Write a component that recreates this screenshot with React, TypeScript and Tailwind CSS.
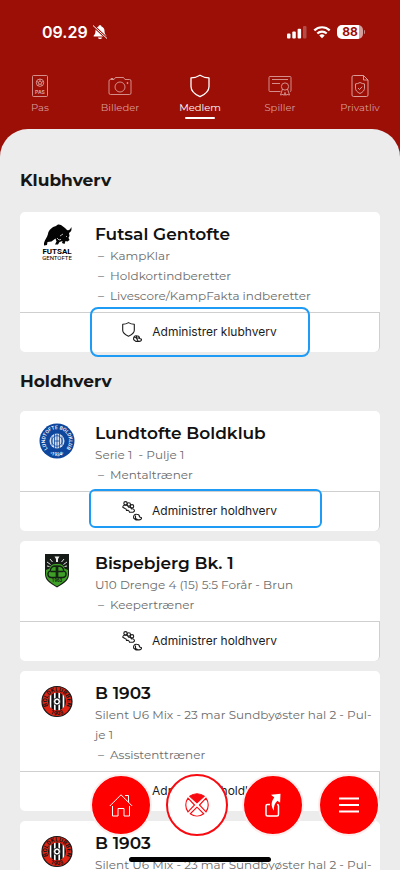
import React from "react";
import type { ReactNode } from "react";

const heading = "font-[Montserrat,Inter,'Noto_Sans',sans-serif]";

function PassIcon() {
  return (
    <svg viewBox="0 0 24 24" className="size-6" fill="none" stroke="currentColor" strokeWidth="0.9" aria-hidden="true">
      <rect x="4.500" y="1.500" width="15" height="21" rx="1" />
      <circle cx="12" cy="8.700" r="3.700" />
      <path d="M12 7l1.700 1.200-.7 2h-2l-.7-2zM12 7V5M13.700 8.200l2-.8M13 10.200l1.200 1.600M11 10.200l-1.200 1.600M10.300 8.200l-2-.8" />
      <text x="12" y="20" textAnchor="middle" fontSize="5" fontWeight="700" fill="currentColor" stroke="none" fontFamily="Inter, sans-serif">PAS</text>
    </svg>
  );
}

function CameraIcon() {
  return (
    <svg viewBox="0 0 24 24" className="size-6" fill="none" stroke="currentColor" strokeWidth="0.9" aria-hidden="true">
      <path d="M2.500 5.500H6l1.500-2h8l1.500 2h4.500a1.500 1.500 0 0 1 1.500 1.500v12a1.500 1.500 0 0 1-1.500 1.500h-19A1.500 1.500 0 0 1 1 19V7a1.500 1.500 0 0 1 1.500-1.500zM3 5.500v-1h2v1" />
      <circle cx="12" cy="13" r="5" />
      <circle cx="19.500" cy="9" r=".6" fill="currentColor" />
    </svg>
  );
}

function ShieldIcon() {
  return (
    <svg viewBox="0 0 24 24" className="size-6" fill="none" stroke="currentColor" strokeWidth="1.300" strokeLinejoin="round" aria-hidden="true">
      <path d="M12 1.200C9 3 6 3.800 3 3.900v8.500c0 4.300 3.500 7.700 9 10.300 5.500-2.600 9-6 9-10.300V3.900c-3-.1-6-.9-9-2.700z" />
    </svg>
  );
}

function CertificateIcon() {
  return (
    <svg viewBox="0 0 24 24" className="size-6" fill="none" stroke="currentColor" strokeWidth="0.900" aria-hidden="true">
      <path d="M12.500 17.500H2a1 1 0 0 1-1-1v-13a1 1 0 0 1 1-1h20a1 1 0 0 1 1 1v13a1 1 0 0 1-1 1M4 5.500h16M4 9.500h8" />
      <circle cx="17" cy="12.500" r="3.600" />
      <path d="M14.500 15l-2 6 2.500-.6 1.200 1 .8-3 .8 3 1.200-1 2.500.6-2-6" />
    </svg>
  );
}

function PrivacyIcon() {
  return (
    <svg viewBox="0 0 24 24" className="size-6" fill="none" stroke="currentColor" strokeWidth="1" strokeLinejoin="round" aria-hidden="true">
      <path d="M15.500 1.500h-10a1.500 1.500 0 0 0-1.500 1.500v18a1.500 1.500 0 0 0 1.500 1.500h13a1.500 1.500 0 0 0 1.500-1.500V6zM15.500 1.500V6H20" />
      <path d="M12 8.500c-1.500.9-3 1.300-4.500 1.400v4.300c0 2.200 1.700 4 4.500 5.300 2.800-1.300 4.500-3.100 4.500-5.300V9.900c-1.500-.1-3-.5-4.500-1.400zM10 14l1.500 1.500 2.700-2.800" />
    </svg>
  );
}

const tabs = [
  { label: "Pas", icon: <PassIcon /> },
  { label: "Billeder", icon: <CameraIcon /> },
  { label: "Medlem", icon: <ShieldIcon />, active: true },
  { label: "Spiller", icon: <CertificateIcon /> },
  { label: "Privatliv", icon: <PrivacyIcon /> },
];

function StatusBar() {
  return (
    <div className="flex items-center justify-between pt-5 pr-[35px] pl-[42px] font-[Inter,sans-serif]">
      <div className="flex items-center gap-1">
        <span className="text-base leading-6 font-semibold">09.29</span>
        <svg viewBox="0 0 16 16" className="size-4" aria-label="Lydløs">
          <path fill="currentColor" d="M8 1.200c.8 0 1.400.5 1.500 1.200 2 .7 3 2.300 3 4.400 0 2.700.8 3.700 1.700 4.600.5.500.2 1.200-.5 1.200H2.300c-.7 0-1-.7-.5-1.200.9-.9 1.700-1.900 1.700-4.600 0-2.100 1-3.700 3-4.400C6.600 1.700 7.200 1.200 8 1.200zM6 13.400h4c-.2 1.100-1 1.700-2 1.700s-1.800-.6-2-1.700z" />
          <path stroke="#9b0f07" strokeWidth="2.400" d="M1 1.500l14 13" />
          <path stroke="currentColor" strokeWidth="1" d="M1 1.500l14 13" />
        </svg>
      </div>
      <div className="flex items-center gap-1.5">
        <svg viewBox="0 0 20 14" className="h-3.5 w-5" fill="currentColor" aria-label="Mobilsignal">
          <rect x="0" y="8.500" width="3.500" height="5" rx="1" />
          <rect x="5.300" y="6.500" width="3.500" height="7" rx="1" />
          <rect x="10.600" y="3.700" width="3.500" height="9.800" rx="1" />
          <rect x="16" y="1" width="3.500" height="12.500" rx="1" opacity=".25" />
        </svg>
        <svg viewBox="0 0 18 14" className="h-3.5 w-[18px]" fill="none" stroke="currentColor" strokeWidth="2.200" aria-label="Wi-Fi">
          <path d="M1.300 5.400a11 11 0 0 1 15.400 0M4.300 8.500a6.700 6.700 0 0 1 9.400 0" />
          <path stroke="none" fill="currentColor" d="M9 13.300l-2.700-2.700a3.800 3.800 0 0 1 5.400 0z" />
        </svg>
        <div className="flex items-center gap-px">
          <span className="flex h-3.5 w-[26px] items-center justify-center rounded-[5px] bg-linear-to-r from-white from-85% to-[#d79f9b] to-85% text-xs leading-3 font-bold text-[#9b0f07]">88</span>
          <span className="h-1 w-px rounded-r bg-white/50" />
        </div>
      </div>
    </div>
  );
}

function FutsalLogo() {
  return (
    <svg viewBox="0 0 36 36" className="size-9" role="img" aria-label="Futsal Gentofte">
      <path d="M5 19c1-4 3-5 4-9 .5-4 4-7 8-8 1-1.500 3-2 5-1l4 3 2 2c2 .8 3.500-.5 4.300-3 .8 3-.3 5-2.300 6l.5 3-1 1.800 1 2.200-2 1.500-2-.5-1 3-2.500-1 .5-2-3 1-1.500 2.500H16l1.500-3-1-3-4 3-4 .5L8 21l-3 .5z" fill="#050505" />
      <path d="M18 14l2 2 2-.6M24 10l-3 2M27 12l1 1" stroke="#fff" strokeWidth=".7" fill="none" />
      <g fontFamily="'Liberation Sans Narrow', Roboto, sans-serif" textAnchor="middle">
        <text x="18" y="29.500" fontSize="8" fontWeight="700">FUTSAL</text>
        <text x="18" y="35.500" fontSize="6">GENTOFTE</text>
      </g>
    </svg>
  );
}

function LundtofteLogo() {
  return (
    <svg viewBox="0 0 36 36" className="size-9" role="img" aria-label="Lundtofte Boldklub">
      <defs>
        <path id="lundtofte-top" d="M9 26A12 12 0 1 1 27 26" />
        <path id="lundtofte-bottom" d="M7 28.500A15.500 15.500 0 0 0 29 28.500" />
      </defs>
      <circle cx="18" cy="18" r="17.500" fill="#0d469c" />
      <g fill="#fff" fontFamily="Roboto, sans-serif" fontWeight="500" fontSize="5">
        <text><textPath href="#lundtofte-top" startOffset="50%" textAnchor="middle">LUNDTOFTE BOLDKLUB</textPath></text>
        <text><textPath href="#lundtofte-bottom" startOffset="50%" textAnchor="middle">•1934•</textPath></text>
      </g>
      <circle cx="18" cy="18" r="7.500" fill="#d5deee" />
      <circle cx="18" cy="18" r="5.300" fill="none" stroke="#0d469c" strokeWidth=".8" />
      <path d="M15.500 11v14M20.500 11v14M13 13.500v9M23 13.500v9M18 10.500v15M15.500 18h5" stroke="#0d469c" strokeWidth=".8" />
    </svg>
  );
}

function BispebjergLogo() {
  return (
    <svg viewBox="0 0 36 36" className="size-9" role="img" aria-label="Bispebjerg Boldklub">
      <path d="M6 1h24v20c0 6-4 9-12 13.500C10 30 6 27 6 21z" fill="#171b17" />
      <path d="M7 17l3.500-1.500C11 12 14 10.500 18 11c4-.5 7 1 7.500 4.500L29 17v4c0 5-4 8-11 12.200C11 29 7 26 7 21z" fill="#3fa027" />
      <path d="M15.500 3.500h5L19 6v3h-2V6z" fill="#eee" />
      <path d="M8 9l3.500 2.500M11 6l2.500 3M28 9l-3.500 2.500M25 6l-2.500 3M8 13l2.500.5M28 13l-2.500.5" stroke="#ddd" strokeWidth="1" />
      <g fill="none" stroke="#132013" strokeWidth="1.300">
        <path d="M17.300 13v11.500h-5c-4 0-4.500-5.500-1-6.500 0-3 2-5 6-5zM11.500 18.500h5.800M18.700 13v11.500h5c4 0 4.500-5.500 1-6.500 0-3-2-5-6-5zM24.500 18.500h-5.800" />
      </g>
      <text x="18" y="29.300" textAnchor="middle" fontSize="4.500" fontWeight="700" fontFamily="Roboto, sans-serif" fill="#132013">1963</text>
    </svg>
  );
}

function B1903Logo({ id }: { id: string }) {
  return (
    <svg viewBox="0 0 36 36" className="size-9" role="img" aria-label="Boldklubben 1903">
      <defs>
        <path id={id + "-top"} d="M10 25A10.200 10.200 0 1 1 26 25" />
        <path id={id + "-bottom"} d="M8.500 28.500A14 14 0 0 0 27.500 28.500" />
        <clipPath id={id + "-clip"}><circle cx="18" cy="18.500" r="9" /></clipPath>
      </defs>
      <circle cx="18" cy="18.500" r="15" fill="#e12313" stroke="#161616" strokeWidth="1.200" />
      <circle cx="18" cy="18.500" r="9" fill="#111" />
      <g clipPath={`url(#${id}-clip)`}>
        <path d="M11.500 9v19M15.800 9v19M20.200 9v19M24.500 9v19" stroke="#fff" strokeWidth="1.700" />
      </g>
      <circle cx="18" cy="18.500" r="3.600" fill="#fff" stroke="#111" strokeWidth=".8" />
      <path d="M18 16.800l1.600 1.200-.6 1.900h-2l-.6-1.900z" fill="#111" />
      <g fill="#161616" fontFamily="Roboto, sans-serif" fontWeight="700" fontSize="6">
        <text><textPath href={`#${id}-top`} startOffset="50%" textAnchor="middle">BOLDKLUBBEN</textPath></text>
        <text><textPath href={`#${id}-bottom`} startOffset="50%" textAnchor="middle">1903</textPath></text>
      </g>
    </svg>
  );
}

function ClubAdminIcon() {
  return (
    <svg viewBox="0 0 20 20" className="size-5" fill="none" stroke="#1c1c1c" strokeWidth="1.100" strokeLinejoin="round" aria-hidden="true">
      <path d="M6.500.6C4.500 1.800 2.500 2.200.7 2.300v6c0 2.600 2.300 4.400 5.800 6 3.500-1.600 5.800-3.400 5.800-6v-6c-1.800-.1-3.800-.5-5.800-1.700z" />
      <path d="M11.800 17.800c-.8-2.500.7-4.300 2.900-4 1.900 0 2.800 1.200 2.900 2.700l2 .8c0 1.400-1 2.100-2.500 2.100h-3.300zM12.500 15.500l5 .8M14.500 14.200v2l1.500 2.600" />
    </svg>
  );
}

function TeamAdminIcon() {
  return (
    <svg viewBox="0 0 20 20" className="size-5" fill="none" stroke="#1c1c1c" strokeWidth="1.100" strokeLinejoin="round" aria-hidden="true">
      <circle cx="3.500" cy="2.300" r="1.700" />
      <circle cx="6.800" cy="3.500" r="1.700" />
      <circle cx="10" cy="5.300" r="1.700" />
      <path d="M.8 6.300c0-1.800 1.500-2.600 3-2 1.500-.2 2.500.7 2.700 1.900 1.600-.4 2.700.4 3 1.700 1.500-.5 3 .5 3 2.100L11 11.300H7.500c0-1-.4-1.600-1.200-1.900H4.500C4.500 8.300 4 7.600 3 7.500z" />
      <path d="M11.800 17.300c-.8-2.500.7-4.300 2.900-4 1.900 0 2.800 1.200 2.900 2.700l2 .8c0 1.400-1 2.100-2.500 2.100h-3.300zM13.500 14.500v3l2 1" />
    </svg>
  );
}

type CardProps = {
  logo: ReactNode;
  name: string;
  team?: string;
  roles: string[];
  action: string;
  icon: ReactNode;
  marker?: ReactNode;
};

function RoleCard({ logo, name, team, roles, action, icon, marker }: CardProps) {
  return (
    <article className="relative rounded-[5px] bg-white">
      <div className="flex gap-5 pt-2.5 pr-2 pb-1.5 pl-[19px]">
        <div className="shrink-0 pt-0.5">{logo}</div>
        <div className={`min-w-0 flex-1 text-xs leading-5 text-[#6c6c6c] ${heading}`}>
          <h3 className="text-[17px] leading-6 font-semibold text-[#111]">{name}</h3>
          {team && <p className="whitespace-pre-wrap">{team}</p>}
          <ul>
            {roles.map((role) => (
              <li key={role} className="flex gap-1.5 pl-[3px]"><span>–</span>{role}</li>
            ))}
          </ul>
        </div>
      </div>
      <button type="button" className="flex h-10 w-full items-center justify-center gap-2.5 rounded-b-[5px] border-t border-r border-[#cfcfcf] pb-px font-[Inter,sans-serif] text-xs text-[#1c1c1c]">
        {icon}
        {action}
      </button>
      {marker}
    </article>
  );
}

const homeIcon = (
  <svg viewBox="0 0 24 24" className="size-6" fill="none" stroke="currentColor" strokeWidth="1" aria-hidden="true">
    <path d="M.8 13L12 1.800 23.200 13M16 2.500h3.500V9M3.500 13v10H9v-7.500h6V23h5.500V13" />
  </svg>
);
const ballIcon = (
  <svg viewBox="0 0 26 26" className="size-[26px]" fill="none" stroke="currentColor" strokeWidth="1.100" aria-hidden="true">
    <path d="M13 10.800L5.800 4.300a11.500 11.500 0 0 1 14.400 0z" fill="currentColor" />
    <path d="M10.500 13L4 6.200a11.500 11.500 0 0 0 0 13.600zM15.500 13L22 6.200a11.500 11.500 0 0 1 0 13.600zM13 15.200l-6.700 6.600a11.500 11.500 0 0 0 13.400 0z" />
  </svg>
);
const shareIcon = (
  <svg viewBox="0 0 24 24" className="size-6" fill="none" stroke="currentColor" strokeWidth="1.500" aria-hidden="true">
    <path d="M9 11.500H6.500a1.500 1.500 0 0 0-1.500 1.500v8.500A1.500 1.500 0 0 0 6.500 23h9.500a1.500 1.500 0 0 0 1.500-1.500V13a1.500 1.500 0 0 0-1.500-1.500" />
    <path d="M10 1.800L19.500.7l-.4 9-2.700-2c-2.600 2.500-4 5.500-3.400 10-3.500-4.500-2.800-9.400.3-13.200z" fill="currentColor" stroke="none" />
  </svg>
);
const menuIcon = (
  <svg viewBox="0 0 24 24" className="size-6" stroke="currentColor" strokeWidth="1.800" aria-hidden="true">
    <path d="M2 5.500h20M2 12h20M2 18.500h20" />
  </svg>
);

const navItems = [
  { label: "Hjem", icon: homeIcon },
  { label: "Kampe", icon: ballIcon, active: true },
  { label: "Del", icon: shareIcon },
  { label: "Menu", icon: menuIcon },
];

export default function App() {
  const sundby = "Silent U6 Mix - 23 mar Sundbyøster hal 2 - Pul\u00adje 1";
  return (
    <div className="relative flex h-screen flex-col overflow-hidden bg-[#9b0f07] text-white">
      <header>
        <StatusBar />
        <nav className={`grid grid-cols-5 pt-[30px] pb-2 ${heading}`}>
          {tabs.map((tab) => (
            <button key={tab.label} type="button" className={tab.active ? "flex flex-col items-center text-white" : "flex flex-col items-center text-[#da9c98]"}>
              {tab.icon}
              <span className="mt-0.5 text-[10px] leading-4">{tab.label}</span>
              <span className={tab.active ? "mt-px h-0.5 w-[30px] rounded bg-white" : "mt-px h-0.5"} />
            </button>
          ))}
        </nav>
      </header>
      <main className="mt-0.5 min-h-0 flex-1 overflow-y-auto rounded-t-[28px] bg-[#ececec] px-5 [scrollbar-width:none]">
        <h2 className={`pt-[39px] pb-5 text-[17px] leading-6 font-bold text-[#161616] ${heading}`}>Klubhverv</h2>
        <RoleCard
          logo={<FutsalLogo />}
          name="Futsal Gentofte"
          roles={["KampKlar", "Holdkortindberetter", "Livescore/KampFakta indberetter"]}
          action="Administrer klubhverv"
          icon={<ClubAdminIcon />}
          marker={<span className="pointer-events-none absolute right-[70px] -bottom-[5px] left-[70px] h-[50px] rounded-lg border-2 border-[#1e9bf5]" />}
        />
        <h2 className={`pt-[17px] pb-[18px] text-[17px] leading-6 font-bold text-[#161616] ${heading}`}>Holdhverv</h2>
        <div className="flex flex-col gap-2.5">
          <RoleCard
            logo={<LundtofteLogo />}
            name="Lundtofte Boldklub"
            team="Serie 1  - Pulje 1"
            roles={["Mentaltræner"]}
            action="Administrer holdhverv"
            icon={<TeamAdminIcon />}
            marker={<span className="pointer-events-none absolute right-[58px] bottom-[3px] left-[69px] h-[39px] rounded-md border-2 border-[#1e9bf5]" />}
          />
          <RoleCard
            logo={<BispebjergLogo />}
            name="Bispebjerg Bk. 1"
            team="U10 Drenge 4 (15) 5:5 Forår - Brun"
            roles={["Keepertræner"]}
            action="Administrer holdhverv"
            icon={<TeamAdminIcon />}
          />
          <RoleCard logo={<B1903Logo id="b1903-a" />} name="B 1903" team={sundby} roles={["Assistenttræner"]} action="Administrer holdhverv" icon={<TeamAdminIcon />} />
          <RoleCard logo={<B1903Logo id="b1903-b" />} name="B 1903" team={sundby} roles={["Assistenttræner"]} action="Administrer holdhverv" icon={<TeamAdminIcon />} />
        </div>
      </main>
      <nav className="absolute right-5 bottom-[34px] flex items-center gap-[14px]">
        {navItems.map((item) => (
          <button
            key={item.label}
            type="button"
            aria-label={item.label}
            className={
              item.active
                ? "flex size-[62px] items-center justify-center rounded-full border-2 border-[#f80a10] bg-white text-[#f80a10]"
                : "flex size-[62px] items-center justify-center rounded-full border-2 border-[#fdeeee] bg-[#fe0000] text-white"
            }
          >
            {item.icon}
          </button>
        ))}
      </nav>
      <div className="absolute bottom-2 left-1/2 h-[5px] w-[142px] -translate-x-1/2 rounded-full bg-black" />
    </div>
  );
}
